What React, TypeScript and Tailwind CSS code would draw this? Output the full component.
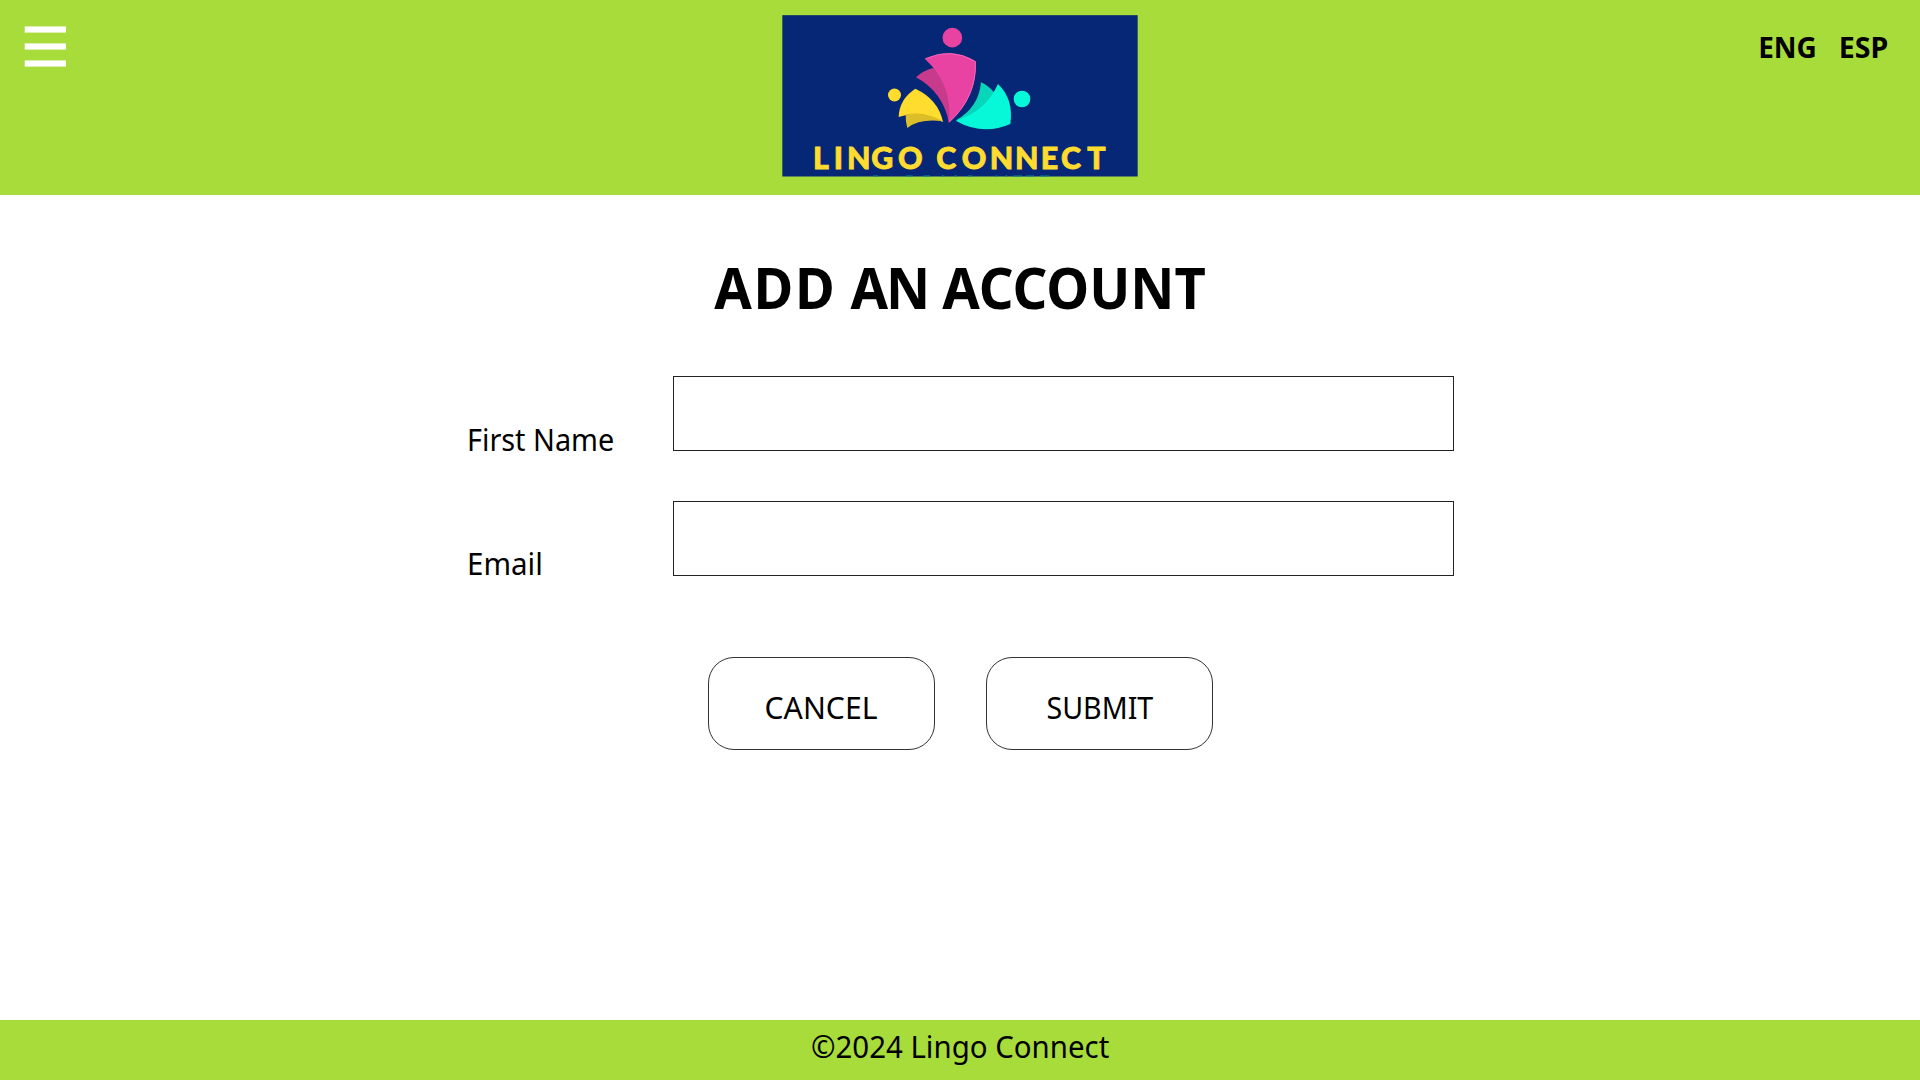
import type { ReactNode } from 'react';

const GREEN_BAR = 'bg-[#a8dc3a]';

function MenuIcon() {
  return (
    <svg width="44" height="44" viewBox="0 0 44 44" fill="#fff" aria-hidden="true">
      <rect x="0.7" y="1.4" width="41.2" height="6.2" />
      <rect x="0.7" y="18.4" width="41.2" height="6.2" />
      <rect x="0.7" y="35.4" width="41.2" height="6.2" />
    </svg>
  );
}

function Logo() {
  return (
    <svg width="356" height="162" viewBox="36 45 1068 486" role="img" aria-label="Lingo Connect">
      <rect x="37" y="45.500" width="1066" height="484" fill="#062776" />
      <circle cx="547" cy="113" r="29.500" fill="#e843a2" />
      <path d="M438 232 Q458 212 490 204 L555 270 L537 368 Q518 275 438 232Z" fill="#c73a8c" />
      <path d="M465 177 Q546 140 617 184 Q623 290 536 369 Q550 255 465 177Z" fill="#e843a2" />
      <path d="M466 176 Q546 141 616 185 Q621 290 538 366" fill="none" stroke="#f565b8" strokeWidth="3" />
      <circle cx="373.500" cy="285" r="19.500" fill="#ffdc2e" />
      <path d="M407 340 L436 310 L500 340 L518 364 Q450 355 412 384 Q406 365 407 340Z" fill="#dcbf28" />
      <path d="M436 266 Q505 298 519 366 Q455 328 386 351 Q388 297 436 266Z" fill="#ffdc2e" />
      <path d="M408 344 Q460 334 517 364" fill="none" stroke="#d6b726" strokeWidth="2.500" />
      <circle cx="756" cy="297" r="25" fill="#06f8d8" />
      <path d="M633 247 Q655 257 672 277 L664 320 L600 358 L558 361 Q627 322 633 247Z" fill="#07d6bb" />
      <path d="M684 252 Q732 298 721 372 Q638 408 557 362 Q646 336 684 252Z" fill="#06f8d8" />
      <g
        fill="#ffdc2e"
        stroke="#ffdc2e"
        strokeWidth="2.500"
        fontFamily="Lato, sans-serif"
        fontWeight="900"
        fontSize="91"
      >
        <text y="505.500" x="129 191 231 304 384">LINGO</text>
        <text y="505.500" x="499 575 659 735 812 873 952">CONNECT</text>
      </g>
      <path
        d="M309 528h15M408 528h20M460 528h20M515 528h8M553 528h8M594 528h14M676 528h6M706 528h6M730 528h26M768 528h24M810 528h28"
        stroke="#0b8791"
        strokeWidth="3"
      />
    </svg>
  );
}

type FieldProps = { id: string; label: string; type: string; labelClass: string; textClass: string };

function Field({ id, label, type, labelClass, textClass }: FieldProps) {
  return (
    <div className="flex h-[75px]">
      <label htmlFor={id} className={`w-[206px] text-[31px] leading-[42px] ${labelClass}`}>
        <span className={`inline-block origin-left whitespace-nowrap ${textClass}`}>{label}</span>
      </label>
      <input id={id} type={type} className="h-[75px] w-[781px] border border-[#222] bg-white px-4 text-[31px] outline-none" />
    </div>
  );
}

function PillButton({ type, children }: { type: 'button' | 'submit'; children: ReactNode }) {
  return (
    <button
      type={type}
      className="flex h-[93px] w-[227px] items-start justify-center rounded-[26px] border border-[#333] bg-white pt-[28px] text-[31px] leading-[42px]"
    >
      {children}
    </button>
  );
}

export default function App() {
  return (
    <div className="flex h-[1080px] w-full flex-col overflow-hidden bg-white font-['Noto_Sans',sans-serif] text-black">
      <header className={`grid h-[195px] shrink-0 grid-cols-[1fr_356px_1fr] items-start ${GREEN_BAR}`}>
        <button type="button" aria-label="Menu" className="ml-6 mt-[25px] w-11">
          <MenuIcon />
        </button>
        <div className="pt-[15px]">
          <Logo />
        </div>
        <nav className="mr-8 mt-[27px] flex justify-end gap-[21px] text-[29px] leading-10 font-bold">
          <a href="#eng" className="origin-right scale-x-[0.965]">ENG</a>
          <a href="#esp" className="origin-right scale-x-[0.985]">ESP</a>
        </nav>
      </header>

      <main className="flex flex-1 flex-col items-center">
        <h1 className="mt-[53px] scale-x-[0.953] text-[57px] leading-[78px] font-bold whitespace-nowrap">
          <span className="tracking-[1.8px]">ADD</span> <span className="tracking-[-2.2px]">AN</span> ACCOUNT
        </h1>
        <form className="mt-[50px] ml-[1px] flex w-[987px] flex-col">
          <div className="flex flex-col gap-[50px]">
            <Field id="first-name" label="First Name" type="text" labelClass="pt-[42px]" textClass="scale-x-[0.93]" />
            <Field id="email" label="Email" type="email" labelClass="pt-[41px]" textClass="scale-x-[0.952]" />
          </div>
          <div className="mt-[81px] flex justify-center gap-[51px]">
            <PillButton type="button">
              <span className="scale-x-[0.974]">CANCEL</span>
            </PillButton>
            <PillButton type="submit">
              <span className="scale-x-[0.923]">SUBMIT</span>
            </PillButton>
          </div>
        </form>
      </main>

      <footer className={`flex h-[60px] shrink-0 justify-center pt-[5px] text-[31px] leading-[42px] ${GREEN_BAR}`}>
        <p className="scale-x-[0.949]">©2024 Lingo Connect</p>
      </footer>
    </div>
  );
}
